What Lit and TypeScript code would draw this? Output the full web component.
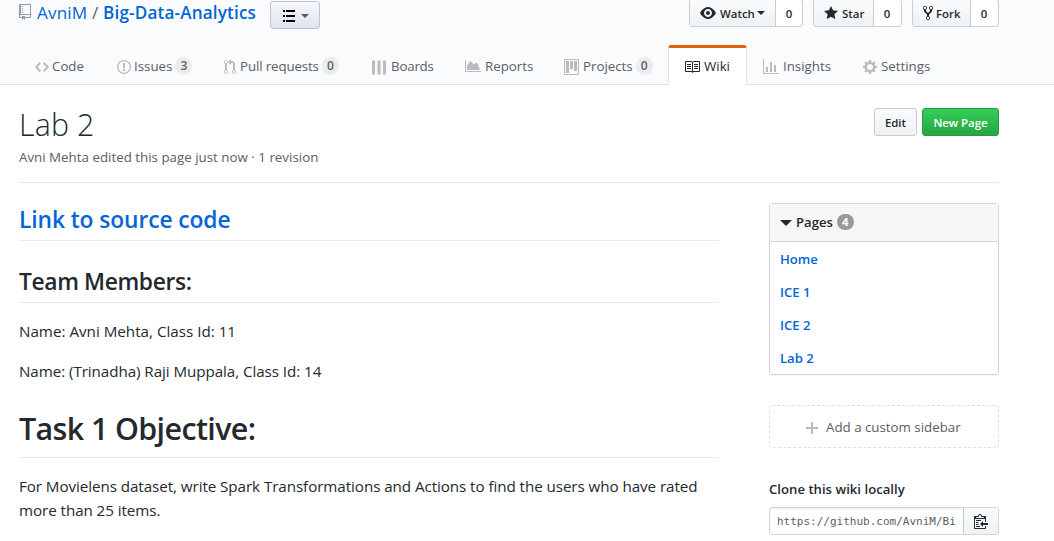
import { LitElement, html, svg, css, nothing } from "lit";
import { customElement } from "lit/decorators.js";
import { classMap } from "lit/directives/class-map.js";

type Icon = { w: number; d: string };

const ICONS: Record<string, Icon> = {
  repo: { w: 12, d: "M4 9H3V8h1v1zm0-3H3v1h1V6zm0-2H3v1h1V4zm0-2H3v1h1V2zm8-1v12c0 .55-.45 1-1 1H6v2l-1.5-1.5L3 16v-2H1c-.55 0-1-.45-1-1V1c0-.55.45-1 1-1h10c.55 0 1 .45 1 1zm-1 10H1v2h2v-1h3v1h5v-2zm0-10H2v9h9V1z" },
  code: { w: 14, d: "M9.5 3L8 4.5 11.5 8 8 11.5 9.5 13 14 8 9.5 3zm-5 0L0 8l4.5 5L6 11.5 2.5 8 6 4.5 4.5 3z" },
  issue: { w: 14, d: "M7 2.3c3.14 0 5.7 2.56 5.7 5.7s-2.56 5.7-5.7 5.7A5.71 5.71 0 0 1 1.3 8c0-3.14 2.56-5.7 5.7-5.7zM7 1C3.14 1 0 4.14 0 8s3.14 7 7 7 7-3.14 7-7-3.14-7-7-7zm1 3H6v5h2V4zm0 6H6v2h2v-2z" },
  pull: { w: 12, d: "M11 11.28V5c-.03-.78-.34-1.47-.94-2.06C9.46 2.35 8.78 2.03 8 2H7V0L4 3l3 3V4h1c.27.02.48.11.69.31.21.2.3.42.31.69v6.28A1.993 1.993 0 0 0 10 15a1.993 1.993 0 0 0 1-3.72zm-1 2.92c-.66 0-1.2-.55-1.2-1.2 0-.65.55-1.2 1.2-1.2.65 0 1.2.55 1.2 1.2 0 .65-.55 1.2-1.2 1.2zM4 3c0-1.11-.89-2-2-2a1.993 1.993 0 0 0-1 3.72v6.56A1.993 1.993 0 0 0 2 15a1.993 1.993 0 0 0 1-3.72V4.72c.59-.34 1-.98 1-1.72zm-.8 10c0 .66-.55 1.2-1.2 1.2-.65 0-1.2-.55-1.2-1.2 0-.65.55-1.2 1.2-1.2.65 0 1.2.55 1.2 1.2zM2 4.2C1.34 4.2.8 3.65.8 3c0-.65.55-1.2 1.2-1.2.65 0 1.2.55 1.2 1.2 0 .65-.55 1.2-1.2 1.2z" },
  boards: { w: 14, d: "M0 1.5h3v14H0zM5.5 1.5h3v14h-3zM11 1.5h3v14h-3z" },
  reports: { w: 16, d: "M0 1h1v11h15v1H0zM2 11V6.5L5.5 2l3 3.5 3-2L13 5l2 6z" },
  project: { w: 15, d: "M10 12h3V2h-3v10zm-4-2h3V2H6v8zm-4 4h3V2H2v12zm-1 1h13V1H1v14zM14 0H1a1 1 0 0 0-1 1v14a1 1 0 0 0 1 1h13a1 1 0 0 0 1-1V1a1 1 0 0 0-1-1z" },
  book: { w: 16, d: "M3 5h4v1H3V5zm0 3h4V7H3v1zm0 2h4V9H3v1zm11-5h-4v1h4V5zm0 2h-4v1h4V7zm0 2h-4v1h4V9zm2-6v9c0 .55-.45 1-1 1H9.5l-1 1-1-1H2c-.55 0-1-.45-1-1V3c0-.55.45-1 1-1h5.5l1 1 1-1H15c.55 0 1 .45 1 1zm-8 .5L7.5 3H2v9h6V3.5zm7-.5H9.5l-.5.5V12h6V3z" },
  graph: { w: 16, d: "M16 14v1H0V0h1v14h15zM5 13H3V8h2v5zm4 0H7V3h2v10zm4 0h-2V6h2v7z" },
  gear: { w: 14, d: "M14 8.77v-1.6l-1.94-.64-.45-1.09.88-1.84-1.13-1.13-1.81.91-1.09-.45-.69-1.92h-1.6l-.63 1.94-1.11.45-1.84-.88-1.13 1.13.91 1.81-.45 1.09L0 7.23v1.59l1.94.64.45 1.09-.88 1.84 1.13 1.13 1.81-.91 1.09.45.69 1.92h1.59l.63-1.94 1.11-.45 1.84.88 1.13-1.13-.92-1.81.47-1.09L14 8.75v.02zM7 11c-1.66 0-3-1.34-3-3s1.34-3 3-3 3 1.34 3 3-1.34 3-3 3z" },
  eye: { w: 16, d: "M8.06 2C3 2 0 8 0 8s3 6 8.06 6C13 14 16 8 16 8s-3-6-7.94-6zM8 12c-2.2 0-4-1.78-4-4 0-2.2 1.8-4 4-4 2.22 0 4 1.8 4 4 0 2.22-1.78 4-4 4zm2-4c0 1.11-.89 2-2 2-1.11 0-2-.89-2-2 0-1.11.89-2 2-2 1.11 0 2 .89 2 2z" },
  star: { w: 14, d: "M14 6l-4.9-.64L7 1 4.9 5.36 0 6l3.6 3.26L2.67 14 7 11.67 11.33 14l-.93-4.74L14 6z" },
  fork: { w: 10, d: "M8 1a1.993 1.993 0 0 0-1 3.72V6L5 8 3 6V4.72A1.993 1.993 0 0 0 2 1a1.993 1.993 0 0 0-1 3.72V6.5l3 3v1.78A1.993 1.993 0 0 0 5 15a1.993 1.993 0 0 0 1-3.72V9.5l3-3V4.72A1.993 1.993 0 0 0 8 1zM2 4.2C1.34 4.2.8 3.65.8 3c0-.65.55-1.2 1.2-1.2.65 0 1.2.55 1.2 1.2 0 .65-.55 1.2-1.2 1.2zm3 10c-.66 0-1.2-.55-1.2-1.2 0-.65.55-1.2 1.2-1.2.65 0 1.2.55 1.2 1.2 0 .65-.55 1.2-1.2 1.2zm3-10c-.66 0-1.2-.55-1.2-1.2 0-.65.55-1.2 1.2-1.2.65 0 1.2.55 1.2 1.2 0 .65-.55 1.2-1.2 1.2z" },
  clippy: { w: 14, d: "M2 13h4v1H2v-1zm5-6H2v1h5V7zm2 3V8l-3 3 3 3v-2h5v-2H9zM4.5 9H2v1h2.5V9zM2 12h2.5v-1H2v1zm9 1h1v2c-.02.28-.11.52-.3.7-.19.18-.42.28-.7.3H1c-.55 0-1-.45-1-1V4c0-.55.45-1 1-1h3c0-1.11.89-2 2-2 1.11 0 2 .89 2 2h3c.55 0 1 .45 1 1v5h-1V6H1v9h10v-2zM2 5h8c0-.55-.45-1-1-1H8c-.55 0-1-.45-1-1s-.45-1-1-1-1 .45-1 1-.45 1-1 1H3c-.55 0-1 .45-1 1z" },
  plus: { w: 12, d: "M12 9H7v5H5V9H0V7h5V2h2v5h5v2z" },
  list: { w: 12, d: "M0 3h2v2H0zM3 3h9v2H3zM0 8h2v2H0zM3 8h9v2H3zM0 13h2v2H0zM3 13h9v2H3z" },
};

const icon = (name: string) => {
  const { w, d } = ICONS[name];
  return html`<svg class="icon ${name}" width=${w} height="16" viewBox="0 0 ${w} 16" fill="currentColor">
    ${svg`<path fill-rule="evenodd" d=${d}></path>`}
  </svg>`;
};

const TABS: { icon: string; label: string; count?: number; active?: boolean }[] = [
  { icon: "code", label: "Code" },
  { icon: "issue", label: "Issues", count: 3 },
  { icon: "pull", label: "Pull requests", count: 0 },
  { icon: "boards", label: "Boards" },
  { icon: "reports", label: "Reports" },
  { icon: "project", label: "Projects", count: 0 },
  { icon: "book", label: "Wiki", active: true },
  { icon: "graph", label: "Insights" },
  { icon: "gear", label: "Settings" },
];

const PAGES = ["Home", "ICE 1", "ICE 2", "Lab 2"];

@customElement("app-root")
export class AppRoot extends LitElement {
  static styles = css`
    :host {
      display: block;
      height: 541px;
      overflow: hidden;
      background: #fff;
      color: #24292e;
      font-family: "Open Sans", "Noto Sans", sans-serif;
      font-size: 15.2px;
      line-height: 24px;
    }
    * { box-sizing: border-box; }
    h1, h2, h3, p { margin: 0; }
    a { color: #0366d6; text-decoration: none; }
    .icon { display: block; flex: none; }

    .header {
      height: 85px;
      padding-left: 19px;
      background: #fafbfc;
      border-bottom: 1px solid #e1e4e8;
    }
    .top {
      display: flex;
      width: 980px;
      height: 45px;
      align-items: flex-start;
    }
    .title {
      display: flex;
      width: 237px;
      height: 26px;
      align-items: center;
      font-size: 17.1px;
      font-weight: 400;
      color: #586069;
      white-space: pre;
      letter-spacing: 0.17px;
    }
    .title .repo { color: #959da5; margin: -3px 6px 0 0; }
    .title .name { font-weight: 600; }
    .menu {
      display: flex;
      align-items: center;
      width: 50px;
      height: 28px;
      margin: 1px 0 0 14px;
      padding-left: 12px;
      border: 1px solid #bfc4d0;
      border-radius: 3px;
      background: linear-gradient(#f5f7fb, #dfe4f2);
      color: #000;
    }
    .caret {
      width: 0;
      height: 0;
      border: 4px solid transparent;
      border-top-color: currentColor;
      border-bottom: 0;
    }
    .menu .caret { margin: 1px 0 0 6px; color: #555b66; }
    .actions { display: flex; gap: 10px; margin: -1px 0 0 auto; }
    .group {
      display: flex;
      height: 28px;
      border: 1px solid #cacccf;
      border-radius: 3px;
      overflow: hidden;
      font-size: 11.4px;
      font-weight: 600;
      background: #fff;
    }
    .act {
      display: flex;
      align-items: center;
      gap: 4px;
      padding-left: 10px;
      border-right: 1px solid #cacccf;
      background: linear-gradient(#fafbfc, #eff3f6 90%);
    }
    .act span { margin-top: 1px; }
    .watch .act { width: 86px; }
    .watch .caret { margin-left: -2px; }
    .star-g .act { width: 60px; }
    .fork-g .act { width: 58px; gap: 3px; }
    .num { width: 26px; line-height: 27px; text-align: center; }
    .star-g .num, .fork-g .num { width: 26px; margin-right: 1px; }

    .tabs {
      display: grid;
      grid-template-columns: 82px 107px 148px 93px 99px 120px 79px 100px 100px;
      height: 40px;
    }
    .tab {
      display: flex;
      align-items: center;
      height: 40px;
      padding: 2px 0 0 16px;
      gap: 3px;
      font-size: 13.3px;
      white-space: nowrap;
      color: #586069;
    }
    .tab .icon { color: #b9bbbe; margin-top: 2px; }
    .tab .boards { margin-right: 2px; }
    .tab .reports, .tab .project { margin-right: 1px; }
    .tab .pull { margin-right: 1px; }
    .tab .graph { margin-right: 1px; }
    .tab .gear { margin-right: 1px; }
    .tab .pull + span { letter-spacing: -0.12px; }
    .tab .boards + span { letter-spacing: -0.2px; }
    .tab.active {
      padding: 0 0 1px 15px;
      border: 1px solid #e1e4e8;
      border-top: 3px solid #e36209;
      border-bottom: 0;
      border-radius: 3px 3px 0 0;
      background: #fff;
      color: #24292e;
      gap: 4px;
    }
    .tab.active .icon { color: #24292e; }
    .count {
      min-width: 17px;
      height: 18px;
      border-radius: 9px;
      background: #ebecee;
      font-size: 12px;
      font-weight: 600;
      line-height: 18px;
      text-align: center;
    }

    .body { width: 980px; margin-left: 19px; }
    .pagehead {
      display: flex;
      justify-content: space-between;
      height: 98px;
      padding-top: 20px;
      border-bottom: 1px solid #e6e8eb;
    }
    .pagehead h1 { font-size: 30.4px; font-weight: 350; line-height: 40px; letter-spacing: 0.1px; }
    .meta { margin-top: 2px; font-size: 13.3px; line-height: 20px; color: #586069; letter-spacing: 0.02px; }
    .buttons { display: flex; gap: 5px; margin-top: 3px; }
    .btn {
      height: 28px;
      border: 1px solid #c8cacd;
      border-radius: 3px;
      background: linear-gradient(#fafbfc, #eff3f6 90%);
      font-size: 11.4px;
      font-weight: 600;
      line-height: 27px;
      text-align: center;
    }
    .edit { width: 43px; }
    .new {
      width: 77px;
      border-color: #269a3f;
      background: linear-gradient(#34d058, #28a745 90%);
      color: #fff;
    }

    .columns { display: flex; justify-content: space-between; }
    .doc { width: 700px; padding-top: 21px; }
    .doc h1, .doc h2 { border-bottom: 1px solid #eaecef; font-weight: 600; }
    .doc h2 { height: 37px; font-size: 22.8px; line-height: 32px; letter-spacing: -0.37px; }
    .doc h2 a { letter-spacing: -0.1px; }
    .doc h2 + h2, .doc p + h1 { margin-top: 25px; }
    .doc h1 { height: 50px; font-size: 30.4px; line-height: 42px; letter-spacing: -0.6px; }
    .doc p { margin-top: 16px; letter-spacing: -0.068px; }
    .doc h2 + p { letter-spacing: 0; }

    .side { width: 230px; padding-top: 20px; font-size: 13.1px; font-weight: 600; }
    .box {
      height: 172px;
      border: 1px solid #d1d5da;
      border-radius: 3px;
      box-shadow: 0 1px 1px rgba(27, 31, 35, 0.05);
    }
    .boxhead {
      display: flex;
      align-items: center;
      height: 38px;
      padding: 0 0 1px 10px;
      background: #f6f6f6;
      border-bottom: 1px solid #d1d5da;
    }
    .tri {
      margin: 1px 4px 0 0;
      border: 6px solid transparent;
      border-top: 6px solid #24292e;
      border-bottom: 0;
    }
    .pill {
      width: 17px;
      height: 16px;
      margin-left: 4px;
      border-radius: 8px;
      background: #959a9f;
      color: #fff;
      font-size: 11.4px;
      font-weight: 700;
      line-height: 16px;
      text-align: center;
    }
    .links { display: flex; flex-direction: column; padding-left: 10px; }
    .links a { height: 33px; line-height: 35px; }
    .add {
      display: flex;
      align-items: center;
      height: 43px;
      margin-top: 30px;
      padding-left: 36px;
      gap: 8px;
      border: 1px dashed #dfe2e5;
      border-radius: 3px;
      color: #586069;
      font-size: 13.3px;
      font-weight: 400;
    }
    .add .icon { color: #babcc0; margin-top: 2px; }
    .clone-title { height: 20px; margin-top: 31px; line-height: 21px; font-size: 13.1px; font-weight: 600; letter-spacing: 0.03px; }
    .clone {
      display: flex;
      height: 28px;
      margin-top: 8px;
      border: 1px solid #d1d5da;
      border-radius: 3px;
      overflow: hidden;
    }
    .url {
      width: 193px;
      padding-left: 7px;
      overflow: hidden;
      box-shadow: inset 0 1px 2px rgba(27, 31, 35, 0.075);
      font: 400 11px/27px "DejaVu Sans Mono", monospace;
      color: #586069;
      white-space: nowrap;
    }
    .copy {
      display: flex;
      align-items: center;
      flex: 1;
      padding-left: 10px;
      border-left: 1px solid #c8cacd;
      background: linear-gradient(#fafbfc, #eff3f6 90%);
    }
  `;

  render() {
    return html`
      <header class="header">
        <div class="top">
          <div class="title">${icon("repo")}<a class="owner">AvniM</a><span class="slash"> / </span><a class="name">Big-Data-Analytics</a></div>
          <div class="menu">${icon("list")}<i class="caret"></i></div>
          <div class="actions">
            <div class="group watch"><div class="act">${icon("eye")}<span>Watch</span><i class="caret"></i></div><div class="num">0</div></div>
            <div class="group star-g"><div class="act">${icon("star")}<span>Star</span></div><div class="num">0</div></div>
            <div class="group fork-g"><div class="act">${icon("fork")}<span>Fork</span></div><div class="num">0</div></div>
          </div>
        </div>
        <nav class="tabs">
          ${TABS.map((t) => html`
            <div class=${classMap({ tab: true, active: !!t.active })}>
              ${icon(t.icon)}<span>${t.label}</span>${t.count === undefined ? nothing : html`<span class="count">${t.count}</span>`}
            </div>`)}
        </nav>
      </header>
      <main class="body">
        <div class="pagehead">
          <div>
            <h1>Lab 2</h1>
            <p class="meta">Avni Mehta edited this page just now · 1 revision</p>
          </div>
          <div class="buttons"><div class="btn edit">Edit</div><div class="btn new">New Page</div></div>
        </div>
        <div class="columns">
          <article class="doc">
            <h2><a>Link to source code</a></h2>
            <h2>Team Members:</h2>
            <p>Name: Avni Mehta, Class Id: 11</p>
            <p>Name: (Trinadha) Raji Muppala, Class Id: 14</p>
            <h1>Task 1 Objective:</h1>
            <p>For Movielens dataset, write Spark Transformations and Actions to find the users who have rated<br />more than 25 items.</p>
          </article>
          <aside class="side">
            <div class="box">
              <div class="boxhead"><i class="tri"></i><span>Pages</span><span class="pill">4</span></div>
              <div class="links">${PAGES.map((p) => html`<a>${p}</a>`)}</div>
            </div>
            <div class="add">${icon("plus")}<span>Add a custom sidebar</span></div>
            <h3 class="clone-title">Clone this wiki locally</h3>
            <div class="clone"><div class="url">https://github.com/AvniM/Bi</div><div class="copy">${icon("clippy")}</div></div>
          </aside>
        </div>
      </main>
    `;
  }
}
